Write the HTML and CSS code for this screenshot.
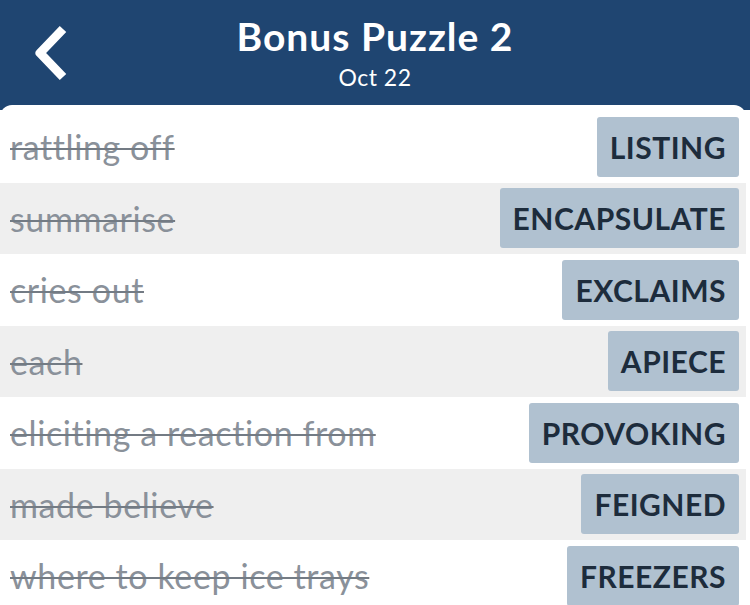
FILE: index.html
```html
<!DOCTYPE html>
<html lang="en">
<head>
    <meta charset="UTF-8">
    <meta name="viewport" content="width=device-width, initial-scale=1.0">
    <title>Bonus Puzzle 2</title>
    <link rel="stylesheet" href="styles.css">
</head>
<body>
    <header class="topbar">
        <a class="back" href="#">
            <svg width="36" height="56" viewBox="0 0 36 56">
                <path d="M30 4 L7 28 L30 52" fill="none" stroke="#fff" stroke-width="9" stroke-linecap="butt" stroke-linejoin="round"/>
            </svg>
        </a>
        <div class="titles">
            <h1>Bonus Puzzle 2</h1>
            <p class="date">Oct 22</p>
        </div>
    </header>

    <main class="panel">
        <ul class="clues">
            <li class="clue"><span class="hint">rattling off</span><span class="answer">LISTING</span></li>
            <li class="clue"><span class="hint">summarise</span><span class="answer">ENCAPSULATE</span></li>
            <li class="clue"><span class="hint">cries out</span><span class="answer">EXCLAIMS</span></li>
            <li class="clue"><span class="hint">each</span><span class="answer">APIECE</span></li>
            <li class="clue"><span class="hint">eliciting a reaction from</span><span class="answer">PROVOKING</span></li>
            <li class="clue"><span class="hint">made believe</span><span class="answer">FEIGNED</span></li>
            <li class="clue"><span class="hint">where to keep ice trays</span><span class="answer">FREEZERS</span></li>
        </ul>
    </main>
</body>
</html>
```

FILE: styles.css
```css
html, body {
    margin: 0;
    padding: 0;
}
body {
    font-family: Lato, "Open Sans", sans-serif;
    background: linear-gradient(#1f4571 0, #1f4571 110px, #fff 110px);
    height: 605px;
    overflow: hidden;
}
.topbar {
    position: relative;
    height: 105px;
    color: #fff;
    display: flex;
    justify-content: center;
}
.back {
    position: absolute;
    left: 33px;
    top: 25px;
}
.titles {
    text-align: center;
    padding-top: 13px;
}
.titles h1 {
    margin: 0;
    font-size: 39px;
    font-weight: 700;
    letter-spacing: 1px;
    line-height: 46px;
}
.date {
    margin: 2px 0 0;
    font-size: 23px;
    letter-spacing: 0.5px;
    line-height: 32px;
}
.panel {
    background-color: #fff;
    border-radius: 12px 12px 0 0;
    padding-top: 6px;
    margin-right: 4px;
    height: 500px;
}
.clues {
    list-style: none;
    margin: 0;
    padding: 0;
}
.clue {
    display: flex;
    align-items: center;
    justify-content: space-between;
    height: 71.5px;
    padding: 0 7px 0 10px;
}
.clue:nth-child(even) {
    background-color: #efefef;
}
.hint {
    font-size: 34px;
    letter-spacing: 0.6px;
    color: #8a919a;
    text-decoration: line-through;
    text-decoration-thickness: 2px;
    text-decoration-color: #737b84;
}
.answer {
    background-color: #b0c1d0;
    color: #1d2c3c;
    font-size: 30px;
    font-weight: 700;
    letter-spacing: 0.5px;
    height: 60px;
    line-height: 60px;
    padding: 0 13px;
    border-radius: 3px;
}
```
